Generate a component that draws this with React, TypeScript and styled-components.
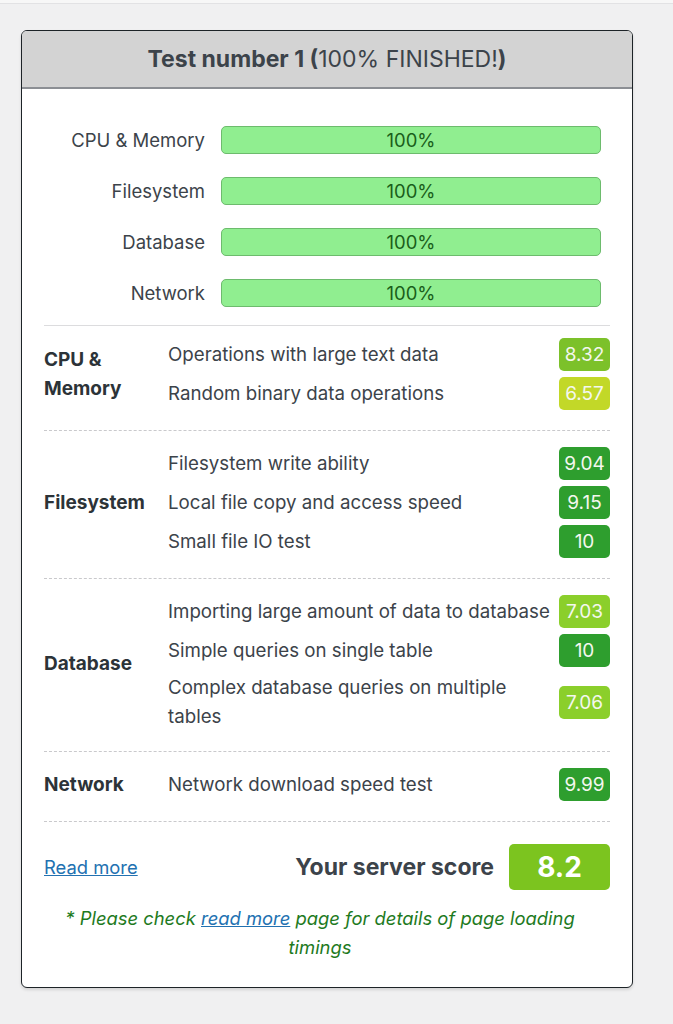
import React from "react";
import styled, { createGlobalStyle } from "styled-components";

const Global = createGlobalStyle`
  html, body { margin: 0; padding: 0; background: #f0f0f1; }
  body { font-family: Inter, Roboto, "Noto Sans", "Liberation Sans", sans-serif; color: #3c434a; }
`;

const TopStrip = styled.div`
  height: 3px;
  background: #f7f7f7;
  border-bottom: 1px solid #e2e2e4;
`;

const Page = styled.div`
  padding: 26px 41px 36px 21px;
`;

const Card = styled.div`
  width: 610px;
  background: #fff;
  border: 1px solid #1d2327;
  border-radius: 6px;
  overflow: hidden;
  box-shadow: 0 2px 3px rgba(0, 0, 0, 0.12);
`;

const Header = styled.div`
  height: 56px;
  background: #d3d3d3;
  border-bottom: 2px solid #8c8f94;
  display: flex;
  align-items: center;
  justify-content: center;
  font-size: 23px;
  color: #3c434a;
`;

const Strong = styled.b`
  font-weight: 700;
`;

const Body = styled.div`
  padding: 0 22px 25px;
`;

const Progress = styled.div`
  display: grid;
  grid-template-columns: 161px 380px;
  column-gap: 16px;
  row-gap: 23px;
  padding: 37px 0 18px;
  border-bottom: 1px solid #dcdcde;
`;

const ProgLabel = styled.div`
  text-align: right;
  font-size: 18.5px;
  line-height: 28px;
  color: #3c434a;
`;

const Bar = styled.div`
  height: 28px;
  box-sizing: border-box;
  border: 1px solid #6dbb6d;
  border-radius: 5px;
  background: #90ee90;
  display: flex;
  align-items: center;
  justify-content: center;
  font-size: 18.5px;
  color: #1a5e1a;
`;

const Section = styled.div<{ $first?: boolean }>`
  display: grid;
  grid-template-columns: 124px 1fr;
  padding: ${(p) => (p.$first ? "9px" : "13px")} 0 17px;
  border-bottom: 1px dashed #c9c9cc;
`;

const SectionLabel = styled.div`
  align-self: center;
  font-weight: 700;
  font-size: 19px;
  line-height: 29px;
  color: #2c3338;
`;

const Items = styled.div`
  display: flex;
  flex-direction: column;
`;

const Row = styled.div`
  display: flex;
  align-items: center;
  justify-content: space-between;
  gap: 8px;
  padding: 3px 0;
  min-height: 33px;
`;

const ItemText = styled.div`
  font-size: 18.7px;
  line-height: 29px;
  color: #3c434a;
`;

const Badge = styled.div<{ $bg: string }>`
  flex: none;
  width: 51px;
  height: 33px;
  border-radius: 5px;
  background: ${(p) => p.$bg};
  color: #f4f7ee;
  font-size: 19px;
  display: flex;
  align-items: center;
  justify-content: center;
`;

const Footer = styled.div`
  display: flex;
  align-items: center;
  padding: 22px 0 0;
`;

const Link = styled.a`
  color: #2271b1;
  text-decoration: underline;
  font-size: 18.4px;
`;

const ScoreLabel = styled.div`
  margin-left: auto;
  font-weight: 700;
  font-size: 23px;
  color: #3c434a;
  margin-right: 15px;
`;

const ScoreBadge = styled.div`
  width: 101px;
  height: 46px;
  border-radius: 5px;
  background: #7cc41f;
  color: #fff;
  font-size: 28px;
  font-weight: 700;
  display: flex;
  align-items: center;
  justify-content: center;
`;

const Note = styled.p`
  margin: 14px 0 0;
  text-align: center;
  font-style: italic;
  font-size: 18.4px;
  line-height: 29px;
  color: #1e7a1e;
  padding: 0 20px 0 6px;
`;

type Item = { text: string; score: string; color: string };
type Group = { label: React.ReactNode; items: Item[] };

const DARK = "#2e9e2e";
const LIME = "#8bcf2b";

const groups: Group[] = [
  {
    label: (
      <>
        CPU &amp;
        <br />
        Memory
      </>
    ),
    items: [
      { text: "Operations with large text data", score: "8.32", color: "#7cc12a" },
      { text: "Random binary data operations", score: "6.57", color: "#c2d828" },
    ],
  },
  {
    label: "Filesystem",
    items: [
      { text: "Filesystem write ability", score: "9.04", color: DARK },
      { text: "Local file copy and access speed", score: "9.15", color: DARK },
      { text: "Small file IO test", score: "10", color: DARK },
    ],
  },
  {
    label: "Database",
    items: [
      { text: "Importing large amount of data to database", score: "7.03", color: LIME },
      { text: "Simple queries on single table", score: "10", color: DARK },
      { text: "Complex database queries on multiple tables", score: "7.06", color: LIME },
    ],
  },
  {
    label: "Network",
    items: [{ text: "Network download speed test", score: "9.99", color: DARK }],
  },
];

const progress = ["CPU & Memory", "Filesystem", "Database", "Network"];

export default function App() {
  return (
    <>
      <Global />
      <TopStrip />
      <Page>
        <Card>
          <Header>
            <span>
              <Strong>Test number 1 (</Strong>100% FINISHED!<Strong>)</Strong>
            </span>
          </Header>
          <Body>
            <Progress>
              {progress.map((p) => (
                <React.Fragment key={p}>
                  <ProgLabel>{p}</ProgLabel>
                  <Bar>100%</Bar>
                </React.Fragment>
              ))}
            </Progress>
            {groups.map((g, i) => (
              <Section key={i} $first={i === 0}>
                <SectionLabel>{g.label}</SectionLabel>
                <Items>
                  {g.items.map((it) => (
                    <Row key={it.text}>
                      <ItemText>{it.text}</ItemText>
                      <Badge $bg={it.color}>{it.score}</Badge>
                    </Row>
                  ))}
                </Items>
              </Section>
            ))}
            <Footer>
              <Link href="#">Read more</Link>
              <ScoreLabel>Your server score</ScoreLabel>
              <ScoreBadge>8.2</ScoreBadge>
            </Footer>
            <Note>
              * Please check <Link href="#">read more</Link> page for details of page loading timings
            </Note>
          </Body>
        </Card>
      </Page>
    </>
  );
}
